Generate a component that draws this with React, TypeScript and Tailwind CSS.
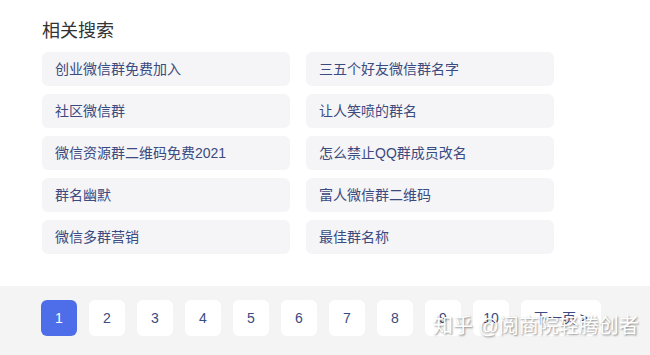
const related = [
  ['创业微信群免费加入', '三五个好友微信群名字'],
  ['社区微信群', '让人笑喷的群名'],
  ['微信资源群二维码免费2021', '怎么禁止QQ群成员改名'],
  ['群名幽默', '富人微信群二维码'],
  ['微信多群营销', '最佳群名称'],
];

const pages = ['1', '2', '3', '4', '5', '6', '7', '8', '9', '10'];

const font = { fontFamily: '"Liberation Sans", "Noto Sans CJK SC", sans-serif' };

export default function App() {
  return (
    <div className="relative w-[650px] h-[355px] bg-white overflow-hidden" style={font}>
      {/* Related searches */}
      <div className="pl-[42px] pt-[19px] h-[286px]">
        <h2 className="text-[18px] leading-[24px] text-[#333333] font-normal">相关搜索</h2>
        <div className="mt-[9px] grid grid-cols-[248px_248px] gap-x-[16px] gap-y-[8px]">
          {related.flat().map((t) => (
            <div
              key={t}
              className="h-[34px] rounded-[6px] bg-[#f5f5f7] px-[13px] flex items-center text-[14px] text-[#3b4a80]"
            >
              {t}
            </div>
          ))}
        </div>
      </div>

      {/* Pagination */}
      <div className="h-[69px] bg-[#f4f4f5] pl-[41px] pt-[14px] flex items-start gap-[12px]">
        {pages.map((p, i) => (
          <div
            key={p}
            className={
              i === 0
                ? 'w-[36px] h-[36px] rounded-[6px] bg-[#4d6ee8] text-white flex items-center justify-center text-[14px]'
                : 'w-[36px] h-[36px] rounded-[6px] bg-white text-[#3b4a80] flex items-center justify-center text-[14px]'
            }
          >
            {p}
          </div>
        ))}
        <div className="w-[80px] h-[36px] rounded-[6px] bg-white text-[#3b4a80] flex items-center justify-center text-[14px]">
          下一页 &gt;
        </div>
      </div>

      {/* Watermark */}
      <div className="absolute left-[433px] top-[313px] text-[20px] leading-[26px] text-white [text-shadow:1px_1px_2px_rgba(0,0,0,0.45)] whitespace-nowrap">
        知乎 @阅商院轻腾创者
      </div>
    </div>
  );
}
